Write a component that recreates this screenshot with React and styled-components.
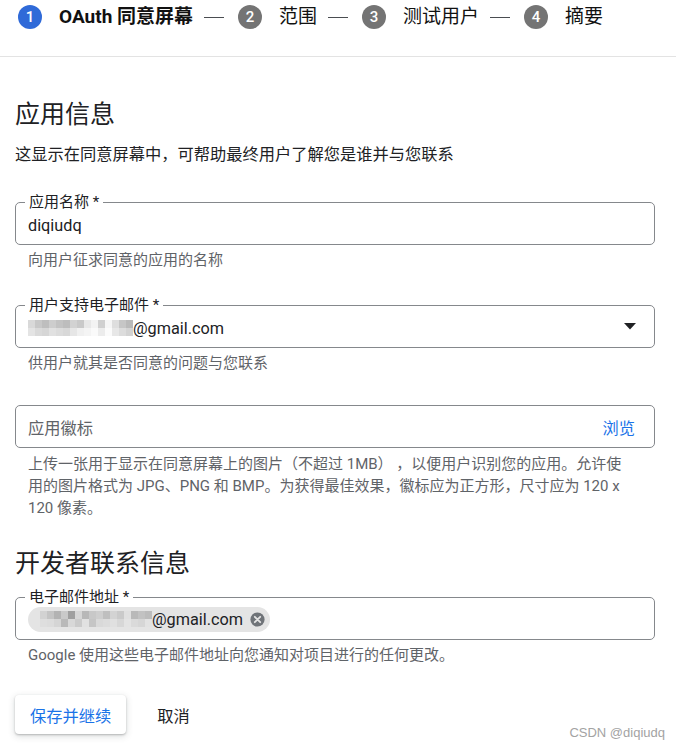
import React from "react";
import styled, { createGlobalStyle } from "styled-components";

const GlobalStyle = createGlobalStyle`
  body {
    margin: 0;
    background: #ffffff;
    font-family: Roboto, "Noto Sans CJK SC", sans-serif;
    color: #202124;
  }
`;

const steps = [
    { n: 1, label: "OAuth 同意屏幕", active: true },
    { n: 2, label: "范围" },
    { n: 3, label: "测试用户" },
    { n: 4, label: "摘要" },
];

// pixelated (blurred) e-mail user part, two rows of grey blocks
const blurSupport = [
    ["#d9d9d9", "#c8c8c8", "#bebebe", "#cdcdcd", "#c3c3c3", "#bdbdbd", "#d2d2d2", "#c9c9c9", "#e8e8e8", "#f3f3f3", "#d0d0d0", "#f6f6f6", "#dedede", "#c6c6c6", "#bababa"],
    ["#e4e4e4", "#dadada", "#d6d6d6", "#e1e1e1", "#dcdcdc", "#d8d8d8", "#e6e6e6", "#f0f0f0", "#f4f4f4", "#fafafa", "#ececec", "#fbfbfb", "#e7e7e7", "#dcdcdc", "#d3d3d3"],
];

const blurChip = [
    ["#d2d2d2", "#c4c4c4", "#b3b3b3", "#c9c9c9", "#9f9f9f", "#d6d6d6", "#b8b8b8", "#c8c8c8", "#cecece", "#bfbfbf", "#d3d3d3", "#cacaca", "#e0e0e0", "#b9b9b9", "#c2c2c2", "#bcbcbc"],
    ["#dedede", "#dcdcdc", "#d5d5d5", "#b9b9b9", "#d8d8d8", "#cbcbcb", "#e1e1e1", "#c5c5c5", "#d9d9d9", "#dcdcdc", "#e0e0e0", "#d7d7d7", "#e3e3e3", "#dadada", "#d6d6d6", "#e2e2e2"],
];

const Blur = ({ rows, cell = 7 }) => (
    <BlurGrid $cols={rows[0].length} $cell={cell}>
        {rows.flat().map((c, i) => (
            <span key={i} style={{ background: c }} />
        ))}
    </BlurGrid>
);

const App = () => {
    return (
        <Page>
            <GlobalStyle />
            <Stepper>
                <StepRow>
                    {steps.map((s, i) => (
                        <React.Fragment key={s.n}>
                            {i > 0 && <Connector />}
                            <Step>
                                <StepCircle $active={s.active}>{s.n}</StepCircle>
                                <StepLabel $active={s.active}>{s.label}</StepLabel>
                            </Step>
                        </React.Fragment>
                    ))}
                </StepRow>
            </Stepper>

            <Content>
                <SectionTitle $mt={42}>应用信息</SectionTitle>
                <Intro>这显示在同意屏幕中，可帮助最终用户了解您是谁并与您联系</Intro>

                <Outline $mt={35}>
                    <FloatLabel>应用名称 *</FloatLabel>
                    <Value>diqiudq</Value>
                </Outline>
                <Helper>向用户征求同意的应用的名称</Helper>

                <Outline $mt={35}>
                    <FloatLabel>用户支持电子邮件 *</FloatLabel>
                    <Value>
                        <Blur rows={blurSupport} />
                        @gmail.com
                    </Value>
                    <Trailing>
                        <svg width="12" height="7" viewBox="0 0 12 7">
                            <path d="M0 0 L12 0 L6 6.5 Z" fill="#202124" />
                        </svg>
                    </Trailing>
                </Outline>
                <Helper>供用户就其是否同意的问题与您联系</Helper>

                <Outline $mt={32}>
                    <Placeholder>应用徽标</Placeholder>
                    <Trailing>
                        <LinkText>浏览</LinkText>
                    </Trailing>
                </Outline>
                <Helper $lh={22}>
                    上传一张用于显示在同意屏幕上的图片（不超过 1MB） ，以便用户识别您的应用。允许使
                    <br />
                    用的图片格式为 JPG、PNG 和 BMP。为获得最佳效果，徽标应为正方形，尺寸应为 120 x
                    <br />
                    120 像素。
                </Helper>

                <SectionTitle $mt={29}>开发者联系信息</SectionTitle>

                <Outline $mt={17}>
                    <FloatLabel>电子邮件地址 *</FloatLabel>
                    <Chip>
                        <Blur rows={blurChip} />
                        <ChipText>@gmail.com</ChipText>
                        <svg width="17" height="17" viewBox="0 0 24 24">
                            <circle cx="12" cy="12" r="10" fill="#6f7378" />
                            <path
                                d="M8.2 8.2 L15.8 15.8 M15.8 8.2 L8.2 15.8"
                                stroke="#e4e4e4"
                                strokeWidth="2.6"
                                strokeLinecap="round"
                            />
                        </svg>
                    </Chip>
                </Outline>
                <Helper>Google 使用这些电子邮件地址向您通知对项目进行的任何更改。</Helper>

                <Actions>
                    <PrimaryButton>保存并继续</PrimaryButton>
                    <TextButton>取消</TextButton>
                </Actions>
            </Content>

            <Watermark>CSDN @diqiudq</Watermark>
        </Page>
    );
};

const Page = styled.div`
    position: relative;
    min-height: 751px;
    overflow: hidden;
`;

const Stepper = styled.div`
    height: 57px;
    box-sizing: border-box;
    padding: 5px 0 0 18px;
    border-bottom: 1px solid #e3e3e3;
`;

const StepRow = styled.div`
    display: flex;
    align-items: center;
    height: 24px;
`;

const Step = styled.div`
    display: flex;
    align-items: center;
    gap: 17px;
`;

const StepCircle = styled.div`
    width: 24px;
    height: 24px;
    border-radius: 50%;
    background: ${(p) => (p.$active ? "#2f6ad8" : "#747474")};
    color: #ffffff;
    display: flex;
    align-items: center;
    justify-content: center;
    font-size: 15px;
    font-weight: 500;
    font-family: Roboto, sans-serif;
`;

const StepLabel = styled.span`
    font-size: 19px;
    line-height: 24px;
    font-weight: ${(p) => (p.$active ? 700 : 400)};
    color: #111111;
`;

const Connector = styled.div`
    width: 20px;
    height: 1px;
    background: #4a4d51;
    margin: 0 14px 0 11px;
`;

const Content = styled.div`
    padding: 0 21px 0 15px;
`;

const SectionTitle = styled.h2`
    margin: ${(p) => p.$mt}px 0 0;
    font-size: 25px;
    line-height: 32px;
    font-weight: 400;
    color: #202124;
`;

const Intro = styled.p`
    margin: 12px 0 0;
    font-size: 16.25px;
    line-height: 24px;
    color: #202124;
`;

const Outline = styled.div`
    position: relative;
    margin-top: ${(p) => p.$mt}px;
    height: 43px;
    box-sizing: border-box;
    border: 1px solid #85888c;
    border-radius: 5px;
    display: flex;
    align-items: center;
    padding: 0 18px 0 12px;
`;

const FloatLabel = styled.span`
    position: absolute;
    top: -10px;
    left: 9px;
    padding: 0 4px;
    background: #ffffff;
    font-size: 15px;
    line-height: 18px;
    color: #202124;
`;

const Value = styled.div`
    display: flex;
    align-items: center;
    font-size: 16.25px;
    color: #202124;
    padding-top: 3px;
`;

const Placeholder = styled.span`
    font-size: 16.25px;
    color: #5f6368;
`;

const Trailing = styled.div`
    margin-left: auto;
    display: flex;
    align-items: center;
`;

const LinkText = styled.span`
    font-size: 16.25px;
    color: #1a73e8;
    margin-right: 1px;
`;

const Helper = styled.div`
    margin-top: 5px;
    padding-left: 13px;
    font-size: 15px;
    line-height: ${(p) => p.$lh || 20}px;
    color: #5f6368;
    white-space: nowrap;
`;

const BlurGrid = styled.span`
    display: inline-grid;
    grid-template-columns: repeat(${(p) => p.$cols}, ${(p) => p.$cell}px);
    grid-auto-rows: 8px;
    span {
        display: block;
    }
`;

const Chip = styled.div`
    display: inline-flex;
    align-items: center;
    height: 25px;
    padding: 0 4px 0 12px;
    border-radius: 13px;
    background: #e4e4e4;
    margin-top: 1px;
    svg {
        margin-left: 6px;
    }
`;

const ChipText = styled.span`
    font-size: 16.25px;
    color: #202124;
`;

const Actions = styled.div`
    display: flex;
    align-items: center;
    margin-top: 30px;
`;

const PrimaryButton = styled.button`
    height: 39px;
    padding: 0 15px;
    border: none;
    border-radius: 4px;
    background: #ffffff;
    color: #1a73e8;
    font-family: Roboto, "Noto Sans CJK SC", sans-serif;
    font-size: 16.25px;
    box-shadow: 0 1px 2px rgba(60, 64, 67, 0.3), 0 2px 6px 1px rgba(60, 64, 67, 0.15);
    cursor: pointer;
`;

const TextButton = styled.button`
    margin-left: 16px;
    height: 39px;
    padding: 0 15px;
    border: none;
    background: transparent;
    color: #202124;
    font-family: Roboto, "Noto Sans CJK SC", sans-serif;
    font-size: 16.25px;
    cursor: pointer;
`;

const Watermark = styled.div`
    position: absolute;
    right: 11px;
    top: 725px;
    font-family: "Liberation Sans", Arial, sans-serif;
    font-size: 13px;
    color: #a3a3a3;
`;

export default App;
